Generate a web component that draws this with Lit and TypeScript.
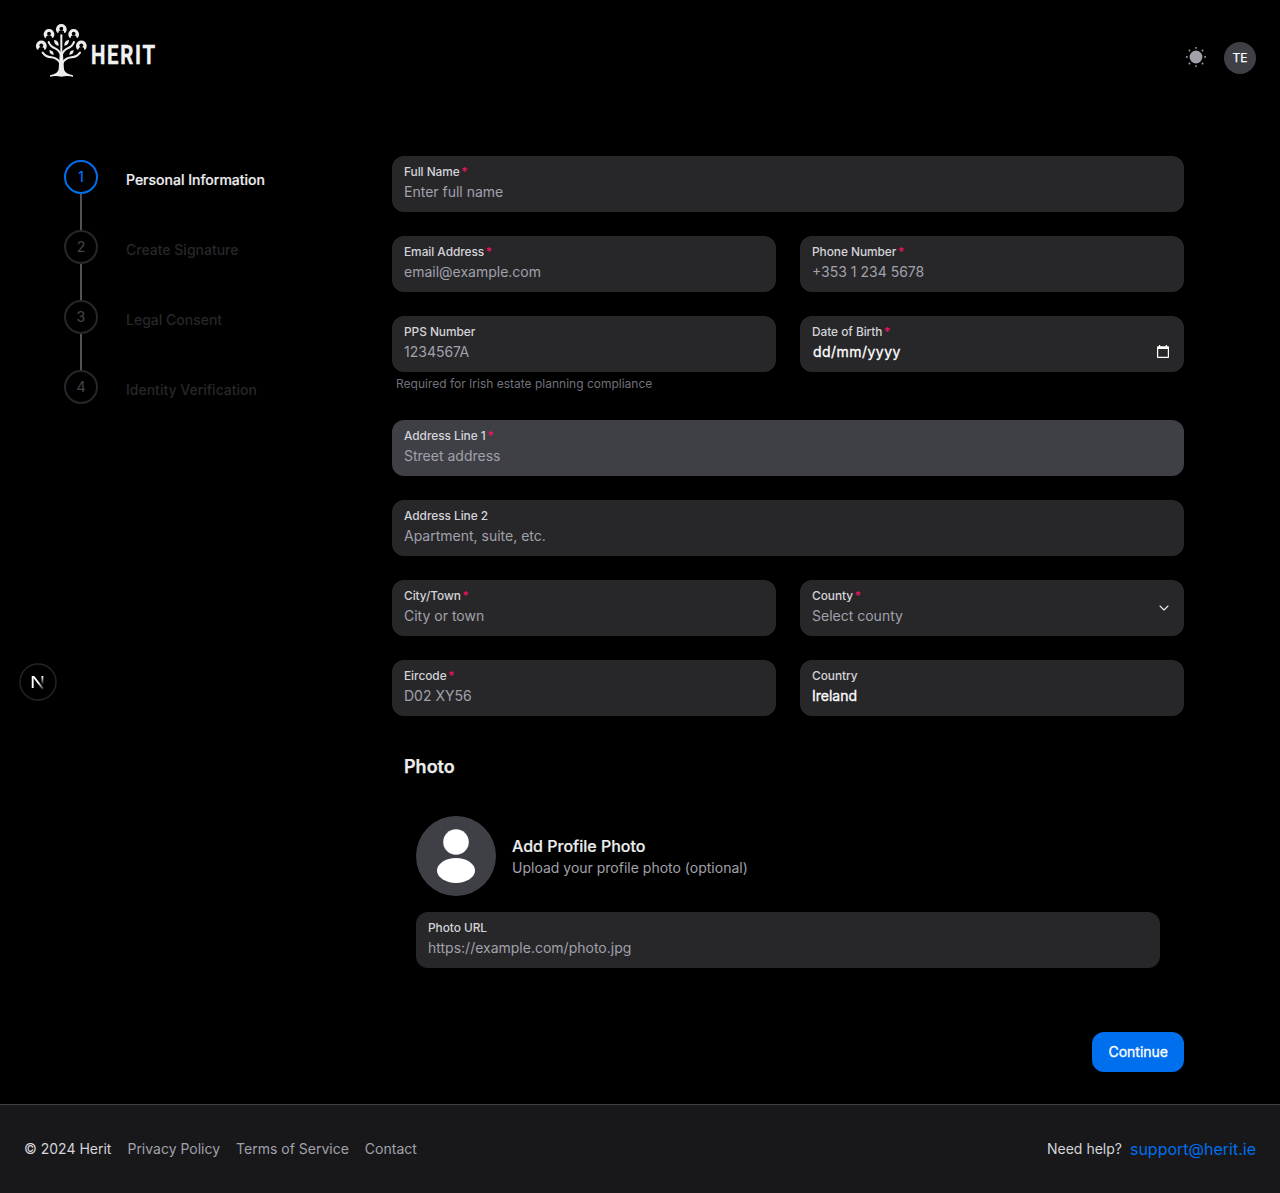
import { LitElement, html, svg, css, nothing } from "lit";
import { customElement, property } from "lit/decorators.js";

const FONT = css`Inter, "Liberation Sans", sans-serif`;

@customElement("herit-logo")
class HeritLogo extends LitElement {
  static styles = css`
    :host { display: block; }
    svg { display: block; overflow: visible; }
    .word { font: 700 26px Roboto, "Liberation Sans", sans-serif; letter-spacing: 2.2px; fill: #f1f1f1; stroke: #f1f1f1; stroke-width: 0.4px; }
  `;
  render() {
    const buds = [[52, 95], [75, 60], [112, 45], [149, 60], [172, 95]];
    return html`<svg width="150" height="70" viewBox="0 0 150 70" role="img">
      <g transform="scale(.33333)" fill="none" stroke="#eeeeec" stroke-linecap="round">
        ${buds.map(([x, y]) => svg`<g transform="translate(${x} ${y}) scale(.95)">
            <path d="M-13 12A17 17 0 1 1 13 12L9 13Q10 6 4 5H-4Q-10 6 -9 13Z" stroke="none" fill="#eeeeec"></path>
            <circle cx="0" cy="-1" r="6" fill="#000" stroke="none"></circle>
            <path d="M-9 13Q-7 5 0 5Q7 5 9 13Z" fill="#000" stroke="none"></path>
          </g>`)}
        <path d="M112 64V140" stroke-width="6"></path>
        <path d="M74 84Q78 97 95 104Q106 109 111 124" stroke-width="6"></path>
        <path d="M150 84Q146 97 129 104Q118 109 113 124" stroke-width="6"></path>
        <path d="M56 116Q65 129 82 130Q101 132 109 148" stroke-width="6"></path>
        <path d="M168 116Q159 129 142 130Q123 132 115 148" stroke-width="6"></path>
        <path d="M107 122L104 166Q102 180 78 184L78 188Q95 184 112 188Q130 184 147 188L147 184Q122 180 120 166L117 122Z" fill="#eeeeec" stroke="none"></path>
        <g fill="#eeeeec" stroke="none">
          <path d="M90 78Q105 80 104 95Q90 94 90 78Z"></path>
          <path d="M135 78Q120 80 121 95Q135 94 135 78Z"></path>
          <path d="M76 109Q88 109 89 122Q77 123 76 109Z"></path>
          <path d="M149 109Q137 109 136 122Q148 123 149 109Z"></path>
        </g>
      </g>
      <text class="word" transform="translate(66.9 50) scale(.785 1)">HERIT</text>
    </svg>`;
  }
}

@customElement("form-field")
class FormField extends LitElement {
  @property() label = "";
  @property() text = "";
  @property() hint = "";
  @property() icon = "";
  @property({ type: Boolean }) required = false;
  @property({ type: Boolean }) filled = false;
  @property({ type: Boolean }) hovered = false;
  static styles = css`
    :host { display: block; font-family: ${FONT}; }
    .box { box-sizing: border-box; height: 56px; padding: 8px 12px; border-radius: 12px; background: #27272a; display: flex; align-items: center; justify-content: space-between; }
    .hovered { background: #3f3f46; }
    .label { font-size: 11.9px; line-height: 16px; font-weight: 500; letter-spacing: -0.05px; color: #d4d4d8; }
    .star { color: #f31260; margin-left: 1.6px; }
    .value { font-size: 14px; line-height: 20px; padding: 2px 0; color: #a1a1aa; }
    .texts { height: 40px; }
    .filled { color: #fff; -webkit-text-stroke: 0.3px #fff; }
    .date { letter-spacing: 0.46px; padding-left: 1px; }
    .hint { font-size: 12px; line-height: 16px; padding: 4px 4px; color: #71717a; }
    svg { display: block; }
    .cal { margin: 14px 3px 0 0; }
  `;
  render() {
    return html`<div class="box ${this.hovered ? "hovered" : ""}">
        <div class="texts">
          <div class="label">${this.label}${this.required ? html`<span class="star">*</span>` : nothing}</div>
          <div class="value ${this.filled ? "filled" : ""} ${this.icon === "date" ? "date" : ""}">${this.text}</div>
        </div>
        ${this.icon === "date"
          ? html`<svg class="cal" width="12" height="13" viewBox="0 0 12 13"><path d="M2 0H3.2V1.2H8.8V0H10V1.2H11.2Q12 1.2 12 2V12.2Q12 13 11.2 13H.8Q0 13 0 12.2V2Q0 1.2.8 1.2H2ZM1.2 4V11.8H10.8V4Z" fill="#fff" fill-rule="evenodd"></path></svg>`
          : nothing}
        ${this.icon === "chevron"
          ? html`<svg width="16" height="16" viewBox="0 0 24 24" fill="none" stroke="#ececec" stroke-width="1.6" stroke-linecap="round" stroke-linejoin="round"><path d="m6 9 6 6 6-6"></path></svg>`
          : nothing}
      </div>
      ${this.hint ? html`<div class="hint">${this.hint}</div>` : nothing}`;
  }
}

@customElement("app-root")
class AppRoot extends LitElement {
  static styles = css`
    :host { display: block; background: #000; color: #ecedee; font-family: ${FONT}; font-size: 14px; line-height: 20px; }
    .page { min-height: 1193px; display: flex; flex-direction: column; box-sizing: border-box; }
    .header { height: 116px; box-sizing: border-box; padding: 14px 24px 0; display: flex; justify-content: space-between; }
    .tools { display: flex; gap: 17px; height: 32px; margin-top: 28px; }
    .sun { margin-top: 3.5px; fill: #a1a1aa; }
    .user { width: 32px; height: 32px; border-radius: 50%; background: #3f3f46; color: #fff; font-size: 12px; line-height: 32px; text-align: center; -webkit-text-stroke: 0.25px #fff; }
    .main { display: flex; flex: 1; padding: 40px 96px 32px 64px; }
    .steps { width: 328px; padding-top: 4px; }
    .step { display: grid; grid-template-columns: 34px 1fr; column-gap: 28px; color: #27272a; font-weight: 500; height: 70px; }
    .rail { display: flex; flex-direction: column; align-items: center; height: 70px; }
    .num { box-sizing: border-box; width: 34px; height: 34px; border: 2px solid #27272a; border-radius: 50%; text-align: center; line-height: 30px; color: #3f3f46; }
    .line { width: 2px; flex: 1; background: #52525b; }
    .name { padding-top: 10px; }
    .active { color: #ecedee; }
    .active .name { -webkit-text-stroke: 0.2px #ecedee; }
    .active .num { border-color: #006fee; color: #006fee; }
    .form { flex: 1; display: flex; flex-direction: column; }
    .grid { display: grid; grid-template-columns: 1fr 1fr; gap: 24px; }
    .wide { grid-column: 1 / 3; }
    .photo-title { margin: 0; padding: 37px 12px 0; font-size: 18px; line-height: 28px; font-weight: 600; -webkit-text-stroke: 0.25px #ecedee; }
    .photo { padding: 35px 24px 0; }
    .profile { display: flex; align-items: center; gap: 16px; margin-bottom: 16px; }
    .avatar { width: 80px; height: 80px; border-radius: 50%; background: #3f3f46; }
    .avatar svg { display: block; }
    .profile-name { font-size: 16px; line-height: 24px; font-weight: 500; -webkit-text-stroke: 0.2px #ecedee; }
    .profile-note { color: #a1a1aa; }
    .go { align-self: flex-end; margin-top: 64px; border: 0; height: 40px; padding: 0 16px; border-radius: 12px; background: #006fee; color: #fff; font: 400 14px/20px ${FONT}; -webkit-text-stroke: 0.3px #fff; }
    .footer { box-sizing: border-box; height: 89px; padding: 0 24px; border-top: 1px solid #3f3f46; background: #18181b; display: flex; align-items: center; justify-content: space-between; }
    .links { display: flex; gap: 16px; align-items: center; color: #a1a1aa; }
    .help { display: flex; gap: 8px; align-items: center; }
    .bright { color: #d4d4d8; }
    .mail { font-size: 16px; line-height: 24px; color: #006fee; }
    .badge { position: absolute; left: 19px; top: 663px; }
  `;
  render() {
    const steps = ["Personal Information", "Create Signature", "Legal Consent", "Identity Verification"];
    return html`<div class="page">
      <header class="header">
        <herit-logo></herit-logo>
        <div class="tools">
          <svg class="sun" width="22" height="22" viewBox="0 0 24 24"><path d="M19 12a7 7 0 11-7-7 7 7 0 017 7z"></path><path d="M12 22.96a.969.969 0 01-1-.96v-.08a1 1 0 012 0 1.038 1.038 0 01-1 1.04zm7.14-2.82a1.024 1.024 0 01-.71-.29l-.13-.13a1 1 0 011.41-1.41l.13.13a1 1 0 010 1.41.984.984 0 01-.7.29zm-14.28 0a1.024 1.024 0 01-.71-.29 1 1 0 010-1.41l.13-.13a1 1 0 011.41 1.41l-.13.13a1 1 0 01-.7.29zM22 13h-.08a1 1 0 010-2 1.038 1.038 0 011.04 1 .969.969 0 01-.96 1zM2.08 13H2a1 1 0 010-2 1.038 1.038 0 011.04 1 .969.969 0 01-.96 1zm16.93-7.01a1.024 1.024 0 01-.71-.29 1 1 0 010-1.41l.13-.13a1 1 0 011.41 1.41l-.13.13a.984.984 0 01-.7.29zm-14.02 0a1.024 1.024 0 01-.71-.29l-.13-.14a1 1 0 011.41-1.41l.13.13a1 1 0 010 1.41.97.97 0 01-.7.3zM12 3.04a.969.969 0 01-1-.96V2a1 1 0 012 0 1.038 1.038 0 01-1 1.04z"></path></svg>
          <div class="user">TE</div>
        </div>
      </header>
      <main class="main">
        <nav class="steps">
          ${steps.map((name, i) => html`<div class="step ${i === 0 ? "active" : ""}">
            <div class="rail"><div class="num">${i + 1}</div>${i < 3 ? html`<div class="line"></div>` : nothing}</div>
            <div class="name">${name}</div>
          </div>`)}
        </nav>
        <section class="form">
          <div class="grid">
            <form-field class="wide" label="Full Name" text="Enter full name" required></form-field>
            <form-field label="Email Address" text="email@example.com" required></form-field>
            <form-field label="Phone Number" text="+353 1 234 5678" required></form-field>
            <form-field label="PPS Number" text="1234567A" hint="Required for Irish estate planning compliance"></form-field>
            <form-field label="Date of Birth" text="dd/mm/yyyy" icon="date" required filled></form-field>
            <form-field class="wide" label="Address Line 1" text="Street address" required hovered></form-field>
            <form-field class="wide" label="Address Line 2" text="Apartment, suite, etc."></form-field>
            <form-field label="City/Town" text="City or town" required></form-field>
            <form-field label="County" text="Select county" icon="chevron" required></form-field>
            <form-field label="Eircode" text="D02 XY56" required></form-field>
            <form-field label="Country" text="Ireland" filled></form-field>
          </div>
          <h3 class="photo-title">Photo</h3>
          <div class="photo">
            <div class="profile">
              <div class="avatar"><svg width="80" height="80" viewBox="0 0 80 80" fill="#fff"><circle cx="40" cy="26" r="12.8"></circle><ellipse cx="40" cy="54.5" rx="19" ry="12.5"></ellipse></svg></div>
              <div>
                <div class="profile-name">Add Profile Photo</div>
                <div class="profile-note">Upload your profile photo (optional)</div>
              </div>
            </div>
            <form-field label="Photo URL" text="https://example.com/photo.jpg"></form-field>
          </div>
          <button class="go">Continue</button>
        </section>
      </main>
      <footer class="footer">
        <div class="links"><span class="bright">© 2024 Herit</span><span>Privacy Policy</span><span>Terms of Service</span><span>Contact</span></div>
        <div class="help"><span class="bright">Need help?</span><span class="mail">support@herit.ie</span></div>
      </footer>
      <svg class="badge" width="38" height="38" viewBox="0 0 38 38" fill="none">
        <defs>
          <linearGradient id="fade" x1="0" y1="13" x2="0" y2="22" gradientUnits="userSpaceOnUse"><stop stop-color="#fff"></stop><stop offset="1" stop-color="#fff" stop-opacity="0"></stop></linearGradient>
          <linearGradient id="tail" x1="19" y1="20" x2="24" y2="26" gradientUnits="userSpaceOnUse"><stop stop-color="#fff"></stop><stop offset="1" stop-color="#fff" stop-opacity=".2"></stop></linearGradient>
        </defs>
        <circle cx="19" cy="19" r="18" fill="#000" stroke="#242424" stroke-width="1.5"></circle>
        <path d="M13 13H15.2L24.8 25.3L23.2 26.6Z" fill="url(#tail)"></path>
        <path d="M13.7 25V13" stroke="#fff" stroke-width="1.9"></path>
        <path d="M23.4 13V21.5" stroke="url(#fade)" stroke-width="1.9"></path>
      </svg>
    </div>`;
  }
}
